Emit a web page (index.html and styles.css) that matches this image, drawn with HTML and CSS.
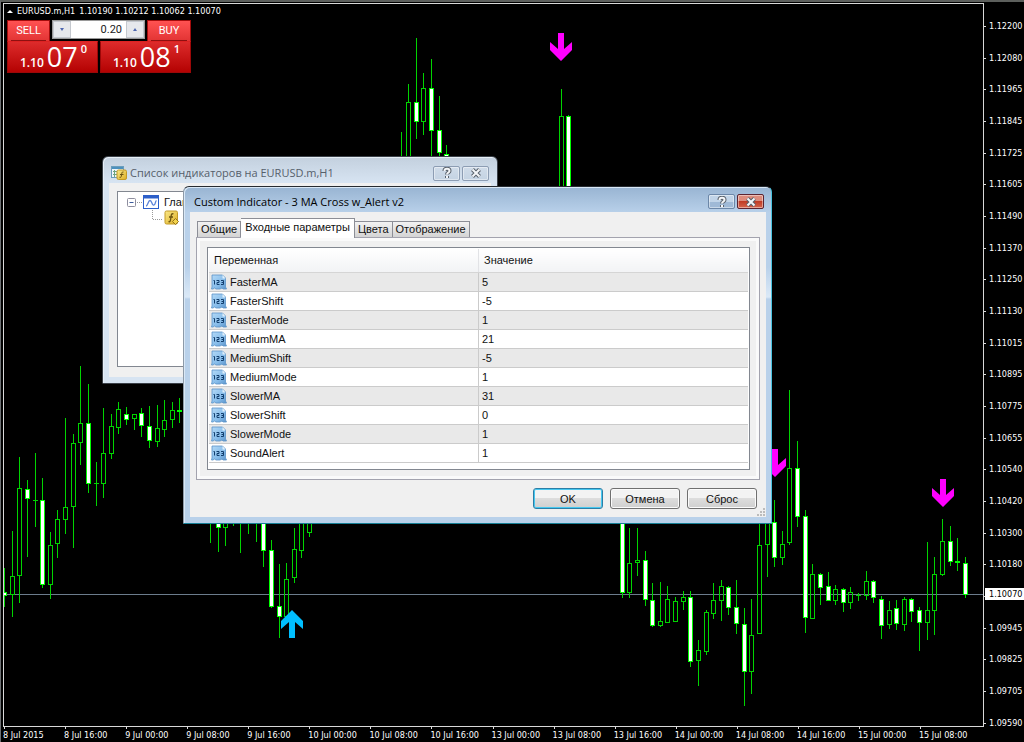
FILE: index.html
```html
<!DOCTYPE html>
<html lang="ru">
<head>
<meta charset="utf-8">
<title>EURUSD.m,H1</title>
<link rel="stylesheet" href="styles.css">
</head>
<body>
<svg class="defs" aria-hidden="true">
  <defs>
    <linearGradient id="sheet" x1="0" y1="0" x2="1" y2="1">
      <stop offset="0" stop-color="#b4daf7"/><stop offset="0.6" stop-color="#86bcea"/><stop offset="1" stop-color="#5b95cc"/>
    </linearGradient>
    <linearGradient id="gold" x1="0" y1="0" x2="1" y2="1">
      <stop offset="0" stop-color="#fbe98a"/><stop offset="1" stop-color="#dcae24"/>
    </linearGradient>
    <symbol id="num" viewBox="0 0 16 16">
      <path d="M1 1H11.5L14.5 4V13L15.5 15H12L11 14L9 15H5L3.500 14L2 15H.5L1 13Z" fill="url(#sheet)" stroke="#5a93c8" stroke-width=".8"/>
      <path d="M11.500 1V4.500H14.500Z" fill="#e0f0fc"/>
      <path d="M2.500 6.500H3.500V10.500M5.500 6.500H8V8.500H6V10.500H8.500M10 6.500H12.500V10.500H10M10.500 8.500H12.500" fill="none" stroke="#123f6e" stroke-width="1"/>
    </symbol>
    <symbol id="func" viewBox="0 0 16 16">
      <rect x="1" y="1" width="12.500" height="13" rx="1.500" fill="url(#gold)" stroke="#c39a27"/>
      <path d="M9.500 4C7.500 3 7.200 5 7 7L6.500 10C6.200 12 5.200 12 4.500 11.500M5 7H9" fill="none" stroke="#6b5310" stroke-width="1.300"/>
      <path d="M11.500 8.500L14.500 11.500L11.500 14.500L8.500 11.500Z" fill="#f2d24b" stroke="#94731a"/>
    </symbol>
    <symbol id="down" viewBox="0 0 22 28">
      <path d="M8 0H14V16L22 9V17L11 28L0 17V9L8 16Z"/>
    </symbol>
  </defs>
</svg>

<main class="chart">
  <section class="plot" aria-label="EURUSD.m,H1">
    <svg class="candles" id="candles" viewBox="4 4 979 722" preserveAspectRatio="xMinYMin meet"></svg>
    <h1 class="quote"><span class="tri"></span><span>EURUSD.m,H1</span><span>1.10190 1.10212 1.10062 1.10070</span></h1>
    <div class="trade">
      <button class="side sell">SELL</button>
      <div class="lot">
        <button class="spin" aria-label="-"><i class="dn"></i></button>
        <input value="0.20" aria-label="Lot">
        <button class="spin" aria-label="+"><i class="up"></i></button>
      </div>
      <button class="side buy">BUY</button>
      <div class="price bid"><small>1.10</small><b>07</b><sup>0</sup></div>
      <div class="price ask"><small>1.10</small><b>08</b><sup>1</sup></div>
    </div>
  </section>
  <ol class="prices">
    <li>1.12200</li><li>1.12080</li><li>1.11965</li><li>1.11845</li><li>1.11725</li><li>1.11605</li><li>1.11490</li><li>1.11370</li><li>1.11250</li><li>1.11130</li><li>1.11015</li><li>1.10895</li><li>1.10775</li><li>1.10655</li><li>1.10540</li><li>1.10420</li><li>1.10300</li><li>1.10180</li><li><span class="current">1.10070</span></li><li>1.09945</li><li>1.09825</li><li>1.09705</li><li>1.09590</li>
  </ol>
  <ol class="dates">
    <li>8 Jul 2015</li><li>8 Jul 16:00</li><li>9 Jul 00:00</li><li>9 Jul 08:00</li><li>9 Jul 16:00</li><li>10 Jul 00:00</li><li>10 Jul 08:00</li><li>10 Jul 16:00</li><li>13 Jul 00:00</li><li>13 Jul 08:00</li><li>13 Jul 16:00</li><li>14 Jul 00:00</li><li>14 Jul 08:00</li><li>14 Jul 16:00</li><li>15 Jul 00:00</li><li>15 Jul 08:00</li>
  </ol>
</main>

<section class="window back" aria-labelledby="list-title">
  <header class="titlebar">
    <svg class="icon" viewBox="0 0 16 16">
      <rect x=".5" y="1.500" width="12" height="11" fill="#eef6fc" stroke="#6b9dbb"/>
      <path d="M1 3H12" stroke="#4c90bd" stroke-width="2"/><path d="M2 6.500H7M2 9.500H7M3.500 5V12" stroke="#6ea37f"/>
      <rect x="6" y="5" width="9.500" height="9.500" rx="1.500" fill="url(#gold)" stroke="#c39a27"/>
      <path d="M12.500 7C10.500 6.500 11 8.500 10.500 10C10.300 12.500 9.500 12.800 8.500 12.300M9 9.500H12.500" fill="none" stroke="#6b5310"/>
    </svg>
    <h2 id="list-title">Список индикаторов на EURUSD.m,H1</h2>
    <button class="cap" aria-label="Help"><svg viewBox="0 0 12 12"><path class="halo" d="M3.500 4C3.500 1 8.500 1 8.500 4C8.500 5.500 6 5.500 6 7.500M6 9V11"/><path class="mark" d="M3.500 4C3.500 1 8.500 1 8.500 4C8.500 5.500 6 5.500 6 7.500M6 9V11"/></svg></button>
    <button class="cap" aria-label="Close"><svg viewBox="0 0 12 12"><path class="halo" d="M2.500 2.500L9.500 9.500M9.500 2.500L2.500 9.500"/><path class="mark" d="M2.500 2.500L9.500 9.500M9.500 2.500L2.500 9.500"/></svg></button>
  </header>
  <div class="client">
    <div class="tree">
      <div class="node"><svg class="twig" viewBox="0 0 16 16"><rect x=".5" y="4.500" width="8" height="8" rx="1" fill="#fff" stroke="#8e8e9e"/><path d="M2.500 8.500H6.500" stroke="#3c5a9c"/><path d="M10 8.500H16" stroke="#999" stroke-dasharray="1 1"/></svg>
        <svg class="icon" viewBox="0 0 16 16"><rect x=".5" y="1.500" width="15" height="13" fill="#fff" stroke="#2c5fc9"/><path d="M1 3H15" stroke="#2c5fc9" stroke-width="3"/><path d="M3 12C5 12 5 6.500 7 6.500S9 12 11 11S12 7 13.500 6.500" fill="none" stroke="#5a83d9" stroke-width="1.300"/></svg>
        <span>Глав</span></div>
      <div class="node child"><svg class="twig" viewBox="0 0 16 16"><path d="M4.500 0V9.500H15" fill="none" stroke="#999" stroke-dasharray="1 1"/></svg><svg class="icon"><use href="#func"/></svg></div>
    </div>
  </div>
</section>

<section class="window front" role="dialog" aria-labelledby="dlg-title">
  <header class="titlebar">
    <h2 id="dlg-title">Custom Indicator - 3 MA Cross w_Alert v2</h2>
    <button class="cap" aria-label="Help"><svg viewBox="0 0 12 12"><path class="halo" d="M3.500 4C3.500 1 8.500 1 8.500 4C8.500 5.500 6 5.500 6 7.500M6 9V11"/><path class="mark" d="M3.500 4C3.500 1 8.500 1 8.500 4C8.500 5.500 6 5.500 6 7.500M6 9V11"/></svg></button>
    <button class="cap close" aria-label="Close"><svg viewBox="0 0 12 12"><path class="halo" d="M2.500 2.500L9.500 9.500M9.500 2.500L2.500 9.500"/><path class="mark" d="M2.500 2.500L9.500 9.500M9.500 2.500L2.500 9.500"/></svg></button>
  </header>
  <div class="client">
    <div class="tabs" role="tablist">
      <button role="tab">Общие</button><button role="tab" class="active" aria-selected="true">Входные параметры</button><button role="tab">Цвета</button><button role="tab">Отображение</button>
    </div>
    <div class="pane" role="tabpanel">
      <div class="list">
        <table>
          <thead><tr><th>Переменная</th><th>Значение</th></tr></thead>
          <tbody>
            <tr><td><svg class="icon"><use href="#num"/></svg>FasterMA</td><td>5</td></tr>
            <tr><td><svg class="icon"><use href="#num"/></svg>FasterShift</td><td>-5</td></tr>
            <tr><td><svg class="icon"><use href="#num"/></svg>FasterMode</td><td>1</td></tr>
            <tr><td><svg class="icon"><use href="#num"/></svg>MediumMA</td><td>21</td></tr>
            <tr><td><svg class="icon"><use href="#num"/></svg>MediumShift</td><td>-5</td></tr>
            <tr><td><svg class="icon"><use href="#num"/></svg>MediumMode</td><td>1</td></tr>
            <tr><td><svg class="icon"><use href="#num"/></svg>SlowerMA</td><td>31</td></tr>
            <tr><td><svg class="icon"><use href="#num"/></svg>SlowerShift</td><td>0</td></tr>
            <tr><td><svg class="icon"><use href="#num"/></svg>SlowerMode</td><td>1</td></tr>
            <tr><td><svg class="icon"><use href="#num"/></svg>SoundAlert</td><td>1</td></tr>
          </tbody>
        </table>
      </div>
    </div>
    <footer class="actions">
      <button class="default">OK</button><button>Отмена</button><button>Сброс</button>
    </footer>
    <svg class="grip" viewBox="0 0 8 8"><path d="M6 0h2v2H6zM3 3h2v2H3zM6 3h2v2H6zM0 6h2v2H0zM3 6h2v2H3zM6 6h2v2H6z" fill="#bcbcbc"/></svg>
  </div>
</section>
<script src="chart.js"></script>
</body>
</html>
```

FILE: styles.css
```css
* { box-sizing: border-box; }
body {
  margin: 0;
  min-height: 100vh;
  background: #000;
  font-family: "Liberation Sans", Arial, sans-serif;
  font-size: 11px;
  color: #111;
  overflow: hidden;
}
h1, h2, ol { margin: 0; padding: 0; font-weight: normal; }
ol { list-style: none; }
button, input { font: inherit; color: inherit; margin: 0; padding: 0; }
.defs { position: absolute; width: 0; height: 0; }
.icon { width: 16px; height: 16px; flex: none; }

/* chart */
.chart {
  display: grid;
  grid-template-columns: 1fr 40px;
  grid-template-rows: 1fr 15px;
  height: 100vh;
  padding: 1px 0 0 2px;
  border-top: 2px solid #5c5f5c;
  border-left: 1px solid #6c6f72;
  color: #fff;
  font-family: "DejaVu Sans Condensed", "DejaVu Sans", sans-serif;
  font-size: 9px;
}
.plot { position: relative; border: 1px solid #d8d8d8; min-width: 0; min-height: 0; }
.candles { display: block; width: 100%; height: 100%; }
.quote {
  position: absolute;
  top: 1px;
  left: 3px;
  display: flex;
  align-items: center;
  gap: 4px;
  font-size: 9px;
  line-height: 12px;
}
.tri { border: 3px solid transparent; border-top: 0; border-bottom-color: #fff; }

.prices {
  grid-row: 1 / 3;
  grid-column: 2;
  display: flex;
  flex-direction: column;
  justify-content: space-between;
  padding: 17px 0 13px;
}
.prices li { position: relative; height: 12px; padding-left: 5px; line-height: 12px; }
.prices li::before { content: ""; position: absolute; left: 0; top: 6px; width: 2px; height: 1px; background: #ddd; }
.current {
  position: absolute;
  inset: -2px 0 auto 1px;
  padding-left: 4px;
  background: #fff;
  color: #000;
}
.dates { grid-column: 1; display: grid; grid-template-columns: repeat(16, 1fr); margin-right: 4px; }
.dates li { position: relative; line-height: 17px; white-space: nowrap; }
.dates li::before { content: ""; position: absolute; left: 1px; top: 0; width: 1px; height: 2px; background: #ddd; }

/* one click trading */
.trade {
  position: absolute;
  top: 16px;
  left: 3px;
  width: 184px;
  display: grid;
  grid-template: 21px 32px / 43px 48px 2px 47px 44px;
  font-family: "Open Sans", sans-serif;
  color: #fff;
}
.side {
  position: relative;
  border: 1px solid #a40c0c;
  border-bottom: 0;
  background: linear-gradient(#ff5252, #e23434);
  font-family: Roboto, sans-serif;
  font-size: 11px;
  line-height: 18px;
}
.side::after { content: ""; position: absolute; left: 3px; right: 3px; bottom: 0; height: 1px; background: #8e1010; }
.sell { grid-area: 1 / 1; }
.buy { grid-area: 1 / 5; }
.lot {
  grid-area: 1 / 2 / 2 / 5;
  display: flex;
  height: 19px;
  margin: 0 2px;
  border: 1px solid #9a9a9a;
  background: #fff;
  font-family: Roboto, sans-serif;
  font-size: 11px;
}
.lot input { flex: 1; min-width: 0; border: 0; background: #fff; color: #222; text-align: right; padding-right: 4px; }
.spin { width: 18px; border: 1px solid #c4c8ce; background: #e6e8ec; display: grid; place-items: center; }
.spin i { border: 2px solid transparent; }
.spin .dn { border-top: 3px solid #4f68b0; border-bottom: 0; }
.spin .up { border-bottom: 3px solid #4f68b0; border-top: 0; }
.price {
  display: flex;
  align-items: baseline;
  justify-content: center;
  gap: 3px;
  padding-left: 2px;
  border: 1px solid #9c0808;
  border-top-color: #d22;
  background: linear-gradient(#dd2b2b, #b40202);
  line-height: 30px;
}
.bid { grid-area: 2 / 1 / 3 / 3; }
.ask { grid-area: 2 / 4 / 3 / 6; }
.price small { font-size: 12px; font-weight: 600; }
.price b { font-size: 27px; font-weight: normal; }
.price sup { align-self: flex-start; font-size: 11px; font-weight: 600; line-height: 14px; }

/* windows */
.window {
  position: absolute;
  display: flex;
  flex-direction: column;
  border: 1px solid #3a4048;
  border-radius: 6px 6px 1px 1px;
}
.back {
  left: 102px;
  top: 156px;
  width: 396px;
  height: 228px;
  padding: 0 6px 6px;
  background: linear-gradient(#c3d0de, #d7e4f2 26px);
  box-shadow: inset 1px 1px #e6eef6;
}
.front {
  left: 183px;
  top: 186px;
  width: 589px;
  height: 338px;
  padding: 0 5px 6px 6px;
  border-color: #252a30 #48c2df #168096 #8d9aa8;
  background: linear-gradient(#98b4d2, #b9d1ea 26px, #b9d1ea 80px, #dbe9f7 110px, #b9d1ea 112px);
  box-shadow: inset 1px 1px #d9e8f6;
}
.titlebar { display: flex; align-items: center; gap: 2px; height: 25px; flex: none; }
.titlebar h2 { flex: 1; padding-left: 4px; font: 11px/18px "Open Sans", "Noto Sans", sans-serif; white-space: nowrap; }
.back .titlebar { height: 26px; padding: 6px 2px 0 2px; color: #56606b; }
.back .titlebar h2 { padding-left: 1px; }
.front .titlebar { padding: 4px 2px 0 0; color: #000; }
.cap {
  width: 27px;
  height: 15px;
  display: grid;
  place-items: center;
  border: 1px solid #8d9db3;
  border-radius: 2px;
  background: linear-gradient(#d0dce9, #c4d3e3);
  box-shadow: inset 0 0 0 1px #ffffff70;
}
.cap svg { width: 12px; height: 12px; fill: none; }
.halo { stroke: #59616b; stroke-width: 4; }
.mark { stroke: #f4f6f8; stroke-width: 2; }
.front .cap { border-color: #6c87a8; background: linear-gradient(#c1d4e8 50%, #9fb9d6 50%); }
.front .close { border-color: #5c2431; background: linear-gradient(#dd8c7d 45%, #c03c26 50%, #d5654c); }
.client { position: relative; flex: 1; display: flex; flex-direction: column; background: #f0f0f0; }
.back .client { padding: 8px 8px 10px; }
.tree { flex: 1; border: 1px solid #828790; background: #fff; padding: 2px 9px; }
.node { display: flex; align-items: center; gap: 0; height: 16px; }
.node .icon { margin-right: 5px; }
.twig { width: 16px; height: 16px; }
.child { padding-left: 21px; }

/* dialog content */
.front .client { padding: 6px 6px 8px; }
.tabs { display: flex; align-items: flex-end; height: 19px; padding-left: 1px; }
.tabs button {
  height: 16px;
  padding: 0 3px;
  border: 1px solid #8c8e96;
  border-bottom: 0;
  border-left-width: 0;
  background: linear-gradient(#f2f2f2, #d4d4d4);
  line-height: 15px;
}
.tabs button:first-child { border-left-width: 1px; }
.tabs .active {
  height: 20px;
  margin-bottom: -1px;
  padding: 0 4px 2px;
  background: #fff;
  z-index: 1;
}
.pane { flex: 1; display: flex; padding: 9px 9px 9px 10px; border: 1px solid #a3a3ae; background: #f0f0f0; box-shadow: inset 0 0 0 3px #fafafa; }
.list { flex: 1; padding: 1px; border: 1px solid #828790; background: #fff; }
table { width: 100%; border-collapse: collapse; table-layout: fixed; }
th { height: 23px; padding: 0 5px; text-align: left; font-weight: normal; background: linear-gradient(#fff, #f2f3f5); border-bottom: 1px solid #d5d5d5; }
th:first-child { width: 50%; border-right: 1px solid #e2e3e6; }
td { height: 19px; padding: 0 3px; border-bottom: 1px solid #cbcbcb; line-height: 16px; vertical-align: middle; }
td:first-child { padding: 0 2px; border-right: 1px solid #cbcbcb; }
td .icon { margin-right: 3px; vertical-align: top; }
tbody tr:nth-child(odd) { background: #e9e9e9; }
.actions { display: flex; justify-content: flex-end; gap: 7px; padding: 8px 3px 0 0; }
.actions button {
  width: 70px;
  height: 21px;
  border: 1px solid #707070;
  border-radius: 3px;
  background: linear-gradient(#f3f3f3 45%, #dddddd 50%, #cfcfcf);
  box-shadow: inset 0 0 0 1px #fbfbfb;
}
.actions .default { border-color: #2c7ea6; box-shadow: inset 0 0 0 1px #46c8f0; }
.grip { position: absolute; right: 1px; bottom: 1px; width: 8px; height: 8px; }
```

FILE: chart.js
```js
// [index, high, body top, body bottom, low, filled]
const bars = [
  [0,568,592,596,607,1],[1,531,576,595,617,0],[2,457,488,576,603,0],[3,480,489,499,557,1],
  [4,453,500,500,527,0],[5,478,500,585,588,1],[6,532,545,585,599,0],[7,510,519,544,558,0],
  [8,418,507,520,534,0],[9,434,443,507,548,0],[10,366,423,443,465,0],[11,384,423,484,493,1],
  [12,462,483,483,506,0],[13,408,453,484,498,0],[14,414,426,454,459,0],[15,402,409,428,434,0],
  [16,407,414,420,425,1],[17,414,414,419,430,0],[18,408,413,426,437,1],[19,406,426,441,448,1],
  [20,405,428,442,447,0],[21,400,420,430,437,0],[22,402,410,420,428,0],[23,398,410,412,423,1],
  [27,500,500,505,543,0],[28,500,510,528,552,1],[29,500,510,528,546,0],[30,500,505,510,526,0],
  [31,500,505,510,553,0],[32,500,505,510,534,0],[33,500,505,510,542,0],[34,500,510,551,567,1],
  [35,540,550,607,608,1],[36,564,606,617,638,1],[37,563,579,617,617,0],[38,528,549,578,583,0],
  [39,500,510,551,558,0],[40,500,510,533,537,0],
  [52,132,180,190,190,0],[53,84,102,190,190,0],[54,38,102,122,139,1],[55,73,88,122,135,0],
  [56,59,88,131,190,1],[57,96,130,153,158,1],[58,145,154,158,160,1],
  [73,89,116,190,190,0],[74,115,116,190,190,1],
  [81,510,510,593,598,1],[82,528,563,593,598,0],[83,528,560,563,576,0],[84,551,560,600,606,1],
  [85,583,600,626,627,1],[86,582,621,626,627,0],[87,586,599,623,623,0],[88,597,601,622,622,0],
  [89,591,597,602,610,0],[90,591,597,662,667,1],[91,640,650,661,686,0],[92,610,612,652,655,0],
  [93,583,600,614,619,0],[94,580,586,601,621,0],[95,586,587,608,615,1],[96,580,607,624,634,1],
  [97,608,624,672,706,1],[98,599,635,672,694,0],[99,510,545,634,634,0],[100,500,510,545,577,0],
  [101,500,522,558,567,1],[102,531,544,558,565,0],[103,390,468,543,545,0],[104,441,468,517,527,1],
  [105,510,516,618,633,1],[106,564,574,619,619,0],[107,573,574,588,605,1],[108,572,586,601,601,1],
  [109,585,589,601,605,0],[110,588,589,603,612,1],[111,587,592,603,609,0],[112,593,595,595,601,0],
  [113,571,581,596,600,0],[114,580,581,598,603,1],[115,596,599,626,639,1],[116,601,610,625,629,0],
  [117,600,608,624,630,1],[118,597,599,625,631,0],[119,598,599,612,622,1],[120,607,610,623,651,1],
  [121,542,610,623,640,0],[122,557,574,611,635,0],[123,519,541,575,576,0],[124,526,541,562,566,1],
  [125,538,561,563,571,1],[126,557,563,595,598,1]
];

let out = '<path d="M4 594.5H983" stroke="#6c7c8c"/>';
for (const [i, high, top, bottom, low, filled] of bars) {
  const x = Math.round(4 + i * 7.625) + 0.5;
  out += `<path d="M${x} ${high}V${top}M${x} ${bottom}V${low}" stroke="#00d400"/>`;
  out += `<rect x="${x - 2}" y="${top + 0.5}" width="4" height="${Math.max(bottom - top - 1, 0)}" fill="${filled ? "#fff" : "none"}" stroke="${filled ? "#00ff00" : "#00d400"}"/>`;
  if (bottom - top < 1) out += `<path d="M${x - 2.5} ${top + 0.5}h5" stroke="#00d400"/>`;
}
for (const [x, y] of [[550, 33], [764, 449], [932, 479]]) {
  out += `<use href="#down" x="${x}" y="${y}" width="22" height="28" fill="#f0f"/>`;
}
out += '<use href="#down" width="22" height="28" fill="#00bfff" transform="translate(303 638) rotate(180)"/>';
document.getElementById("candles").innerHTML = out;
```
